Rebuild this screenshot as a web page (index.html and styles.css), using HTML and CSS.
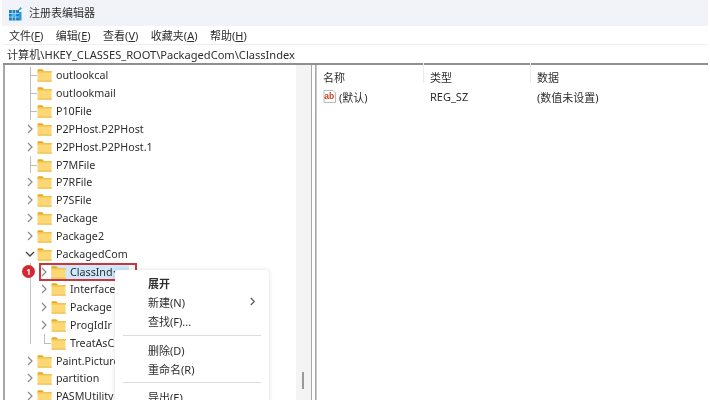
FILE: index.html
```html
<!DOCTYPE html>
<html lang="zh">
<head>
<meta charset="utf-8">
<title>注册表编辑器</title>
<link rel="stylesheet" href="styles.css">
</head>
<body>
<svg class="defs" width="0" height="0" aria-hidden="true">
  <symbol id="folder" viewBox="0 0 15 14">
    <path d="M0.5 2.2a1 1 0 0 1 1-1h3.8l1.7 1.7h-6.5z" fill="#e9a91f"/>
    <path d="M0.5 3h13a1 1 0 0 1 1 1v8.6a1 1 0 0 1-1 1h-12a1 1 0 0 1-1-1z" fill="#fbd776"/>
    <path d="M0.5 3.2h14.5v1.3h-14.5z" fill="#f3bf45"/>
    <path d="M0.5 12.6h14.5v1h-14.5z" fill="#eeb93f"/>
  </symbol>
  <symbol id="chev" viewBox="0 0 8 10">
    <path d="M2 1l4 4-4 4" fill="none" stroke="#8a8a8a" stroke-width="1.2"/>
  </symbol>
  <symbol id="chevd" viewBox="0 0 10 8">
    <path d="M1 2l4 4 4-4" fill="none" stroke="#444" stroke-width="1.3"/>
  </symbol>
</svg>

<div class="app">
  <header class="titlebar">
    <svg class="appicon" viewBox="0 0 13 15" width="13" height="15">
      <rect x="0" y="4" width="10" height="10.500" fill="#1f7fc4"/>
      <path d="M3.300 4v10.500M6.600 4v10.500M0 7.500h10M0 11h10" stroke="#bfe3f7" stroke-width=".8"/>
      <rect x="3.500" y="7.800" width="3" height="3" fill="#36c0e8"/>
      <rect x="10" y="6" width="2.500" height="8.500" fill="#2a9ad8"/>
      <path d="M9.500 3.500l2-2.500 1.500 1.500-2.500 2z" fill="#3a9ed8"/>
    </svg>
    <span>注册表编辑器</span>
  </header>
  <nav class="menubar">
    <span>文件(<u>F</u>)</span>
    <span>编辑(<u>E</u>)</span>
    <span>查看(<u>V</u>)</span>
    <span>收藏夹(<u>A</u>)</span>
    <span>帮助(<u>H</u>)</span>
  </nav>
  <div class="pathbar">计算机\HKEY_CLASSES_ROOT\PackagedCom\ClassIndex</div>

  <main class="panes">
    <section class="tree">
      <div class="rows">
        <div class="row leaf"><i class="tw"></i><svg class="fd"><use href="#folder"/></svg><span>outlookcal</span></div>
        <div class="row leaf"><i class="tw"></i><svg class="fd"><use href="#folder"/></svg><span>outlookmail</span></div>
        <div class="row leaf"><i class="tw"></i><svg class="fd"><use href="#folder"/></svg><span>P10File</span></div>
        <div class="row"><i class="tw"><svg class="ch"><use href="#chev"/></svg></i><svg class="fd"><use href="#folder"/></svg><span>P2PHost.P2PHost</span></div>
        <div class="row"><i class="tw"><svg class="ch"><use href="#chev"/></svg></i><svg class="fd"><use href="#folder"/></svg><span>P2PHost.P2PHost.1</span></div>
        <div class="row leaf"><i class="tw"></i><svg class="fd"><use href="#folder"/></svg><span>P7MFile</span></div>
        <div class="row"><i class="tw"><svg class="ch"><use href="#chev"/></svg></i><svg class="fd"><use href="#folder"/></svg><span>P7RFile</span></div>
        <div class="row"><i class="tw"><svg class="ch"><use href="#chev"/></svg></i><svg class="fd"><use href="#folder"/></svg><span>P7SFile</span></div>
        <div class="row"><i class="tw"><svg class="ch"><use href="#chev"/></svg></i><svg class="fd"><use href="#folder"/></svg><span>Package</span></div>
        <div class="row"><i class="tw"><svg class="ch"><use href="#chev"/></svg></i><svg class="fd"><use href="#folder"/></svg><span>Package2</span></div>
        <div class="row"><i class="tw"><svg class="chd"><use href="#chevd"/></svg></i><svg class="fd"><use href="#folder"/></svg><span>PackagedCom</span></div>
        <div class="children">
          <div class="row sub selected"><i class="tw"><svg class="ch"><use href="#chev"/></svg></i><svg class="fd"><use href="#folder"/></svg><span class="sel">ClassInd⋯</span></div>
          <div class="row sub"><i class="tw"><svg class="ch"><use href="#chev"/></svg></i><svg class="fd"><use href="#folder"/></svg><span>Interface</span></div>
          <div class="row sub"><i class="tw"><svg class="ch"><use href="#chev"/></svg></i><svg class="fd"><use href="#folder"/></svg><span>Package</span></div>
          <div class="row sub"><i class="tw"><svg class="ch"><use href="#chev"/></svg></i><svg class="fd"><use href="#folder"/></svg><span>ProgIdIr</span></div>
          <div class="row sub last"><i class="tw"></i><svg class="fd"><use href="#folder"/></svg><span>TreatAsC</span></div>
        </div>
        <div class="row"><i class="tw"><svg class="ch"><use href="#chev"/></svg></i><svg class="fd"><use href="#folder"/></svg><span>Paint.Picture</span></div>
        <div class="row"><i class="tw"><svg class="ch"><use href="#chev"/></svg></i><svg class="fd"><use href="#folder"/></svg><span>partition</span></div>
        <div class="row"><i class="tw"><svg class="ch"><use href="#chev"/></svg></i><svg class="fd"><use href="#folder"/></svg><span>PASMUtility</span></div>
      </div>
      <div class="scrolltrack"><div class="thumb"></div></div>
    </section>
    <div class="splitter"></div>
    <section class="list">
      <div class="lrow lhead"><span>名称</span><span>类型</span><span>数据</span></div>
      <div class="lrow">
        <span class="namecell">
          <svg class="abicon" viewBox="0 0 13 13" width="13" height="13">
            <path d="M1 .5h9l2.500 2.500v9.500h-11.500z" fill="#fff" stroke="#b9b9b9"/>
            <text x="1.200" y="8.500" class="abtext">ab</text>
          </svg>
          (默认)
        </span>
        <span>REG_SZ</span>
        <span>(数值未设置)</span>
      </div>
    </section>

    <div class="redbox"></div>
    <div class="badge">1</div>

    <div class="ctx">
      <div class="mi strong">展开</div>
      <div class="mi has-sub">新建(N)<svg class="ch2" viewBox="0 0 8 10" width="7" height="9"><path d="M2 1l4 4-4 4" fill="none" stroke="#555" stroke-width="1.300"/></svg></div>
      <div class="mi">查找(F)...</div>
      <div class="sep"></div>
      <div class="mi">删除(D)</div>
      <div class="mi">重命名(R)</div>
      <div class="sep"></div>
      <div class="mi">导出(E)</div>
    </div>
  </main>
</div>
</body>
</html>
```
FILE: styles.css
```css
* { box-sizing: border-box; }
html, body { margin: 0; height: 100%; background: #fff; overflow: hidden; }
body {
  font-family: "Noto Sans", "Noto Sans CJK SC", sans-serif;
  font-size: 11px;
  color: #2e2e2e;
}
.defs { position: absolute; }
.app { width: 710px; height: 400px; display: flex; flex-direction: column; padding-left: 3px; padding-right: 2px; filter: blur(.4px); }

.titlebar {
  height: 26px;
  background: #f1f3f9;
  display: flex;
  align-items: center;
  gap: 7px;
  padding: 0 0 3px 7px;
  margin-left: -1px;
  flex: none;
}
.appicon { flex: none; margin-top: 3px; }

.menubar {
  height: 19px;
  flex: none;
  display: flex;
  align-items: center;
  gap: 12.500px;
  padding-left: 6px;
  border-bottom: 1px solid #efefef;
}
.menubar u { text-underline-offset: 1px; }

.pathbar {
  height: 20px;
  flex: none;
  display: flex;
  align-items: center;
  padding-left: 4px;
  font-size: 11.100px;
  border-bottom: 2px solid #8f8f8f;
}

.panes { flex: 1; min-height: 0; display: flex; position: relative; }

.tree {
  width: 308px;
  flex: none;
  display: flex;
  border-left: 2px solid #a8a8a8;
  overflow: hidden;
}
.rows { flex: 1; min-width: 0; padding-top: 1.500px; }
.row {
  height: 17.830px;
  display: flex;
  align-items: center;
  padding-left: 19px;
  white-space: nowrap;
  font-size: 10.700px;
}
.row.sub { padding-left: 33px; }
.tw { width: 13px; height: 100%; flex: none; display: flex; align-items: center; position: relative; }
.ch { width: 8px; height: 10px; margin-left: 2px; }
.chd { width: 10px; height: 8px; margin-left: 1px; }
.fd { width: 15px; height: 14px; flex: none; margin-right: 4px; }

.leaf .tw::before, .last .tw::before {
  content: "";
  position: absolute;
  left: 6px;
  right: 0;
  top: 50%;
  border-top: 1px solid #bdbdbd;
}
.leaf .tw::after {
  content: "";
  position: absolute;
  left: 6px;
  top: 0;
  bottom: 0;
  border-left: 1px solid #bdbdbd;
}
.last .tw::after {
  content: "";
  position: absolute;
  left: 6px;
  top: 0;
  height: 50%;
  border-left: 1px solid #bdbdbd;
}
.children { position: relative; }
.children::before {
  content: "";
  position: absolute;
  left: 25px;
  top: 0;
  height: 81px;
  border-left: 1px solid #c4c4c4;
}
.selected .fd { margin-right: 0; }
.selected { position: relative; }
.selected::before {
  content: "";
  position: absolute;
  left: 46px;
  width: 78px;
  top: 0;
  bottom: 0;
  background: #cfe8fb;
}
.selected > * { position: relative; }
.sel { padding-left: 4px; }

.scrolltrack { width: 15px; flex: none; background: #f4f4f4; position: relative; }
.thumb { position: absolute; left: 6px; top: 307px; width: 2px; height: 17px; background: #9a9a9a; }

.splitter {
  width: 5px;
  flex: none;
  border-left: 1px solid #a8a8a8;
  border-right: 1px solid #a8a8a8;
}

.list { flex: 1; min-width: 0; padding: 1.500px 0 0 0; border-left: 1px solid #c8c8c8; }
.lrow {
  height: 20px;
  display: grid;
  grid-template-columns: 107px 107px 1fr;
  align-items: center;
  padding-left: 6px;
  font-size: 11px;
}
.lhead span + span { position: relative; }
.lhead span + span::before {
  content: "";
  position: absolute;
  left: -7px;
  top: -6px;
  height: 20px;
  border-left: 1px solid #e6ecf2;
}
.namecell { display: flex; align-items: center; gap: 3px; }
.abicon { flex: none; }
.abtext { font-family: "Liberation Sans", sans-serif; font-size: 8.500px; font-weight: 700; fill: #d0401f; }

.redbox {
  position: absolute;
  left: 36px;
  top: 198px;
  width: 98px;
  height: 18px;
  border: 2px solid #c9373d;
  pointer-events: none;
}
.badge {
  position: absolute;
  left: 19px;
  top: 200px;
  width: 13px;
  height: 13px;
  border-radius: 50%;
  background: #d8262f;
  color: #fff;
  font-size: 8px;
  font-weight: 700;
  display: flex;
  align-items: center;
  justify-content: center;
}

.ctx {
  position: absolute;
  left: 112px;
  top: 205px;
  width: 154px;
  height: 140px;
  background: #fff;
  border-radius: 4px 4px 0 0;
  box-shadow: 0 0 5px rgba(0, 0, 0, .14);
  padding: 3px 8px 0;
}
.mi {
  height: 19.300px;
  display: flex;
  align-items: center;
  justify-content: space-between;
  padding: 0 5px 0 25px;
  font-size: 11px;
}
.strong { font-weight: 700; }
.sep { height: 1px; background: #dcdcdc; margin: 4px 0 4px; }
```
